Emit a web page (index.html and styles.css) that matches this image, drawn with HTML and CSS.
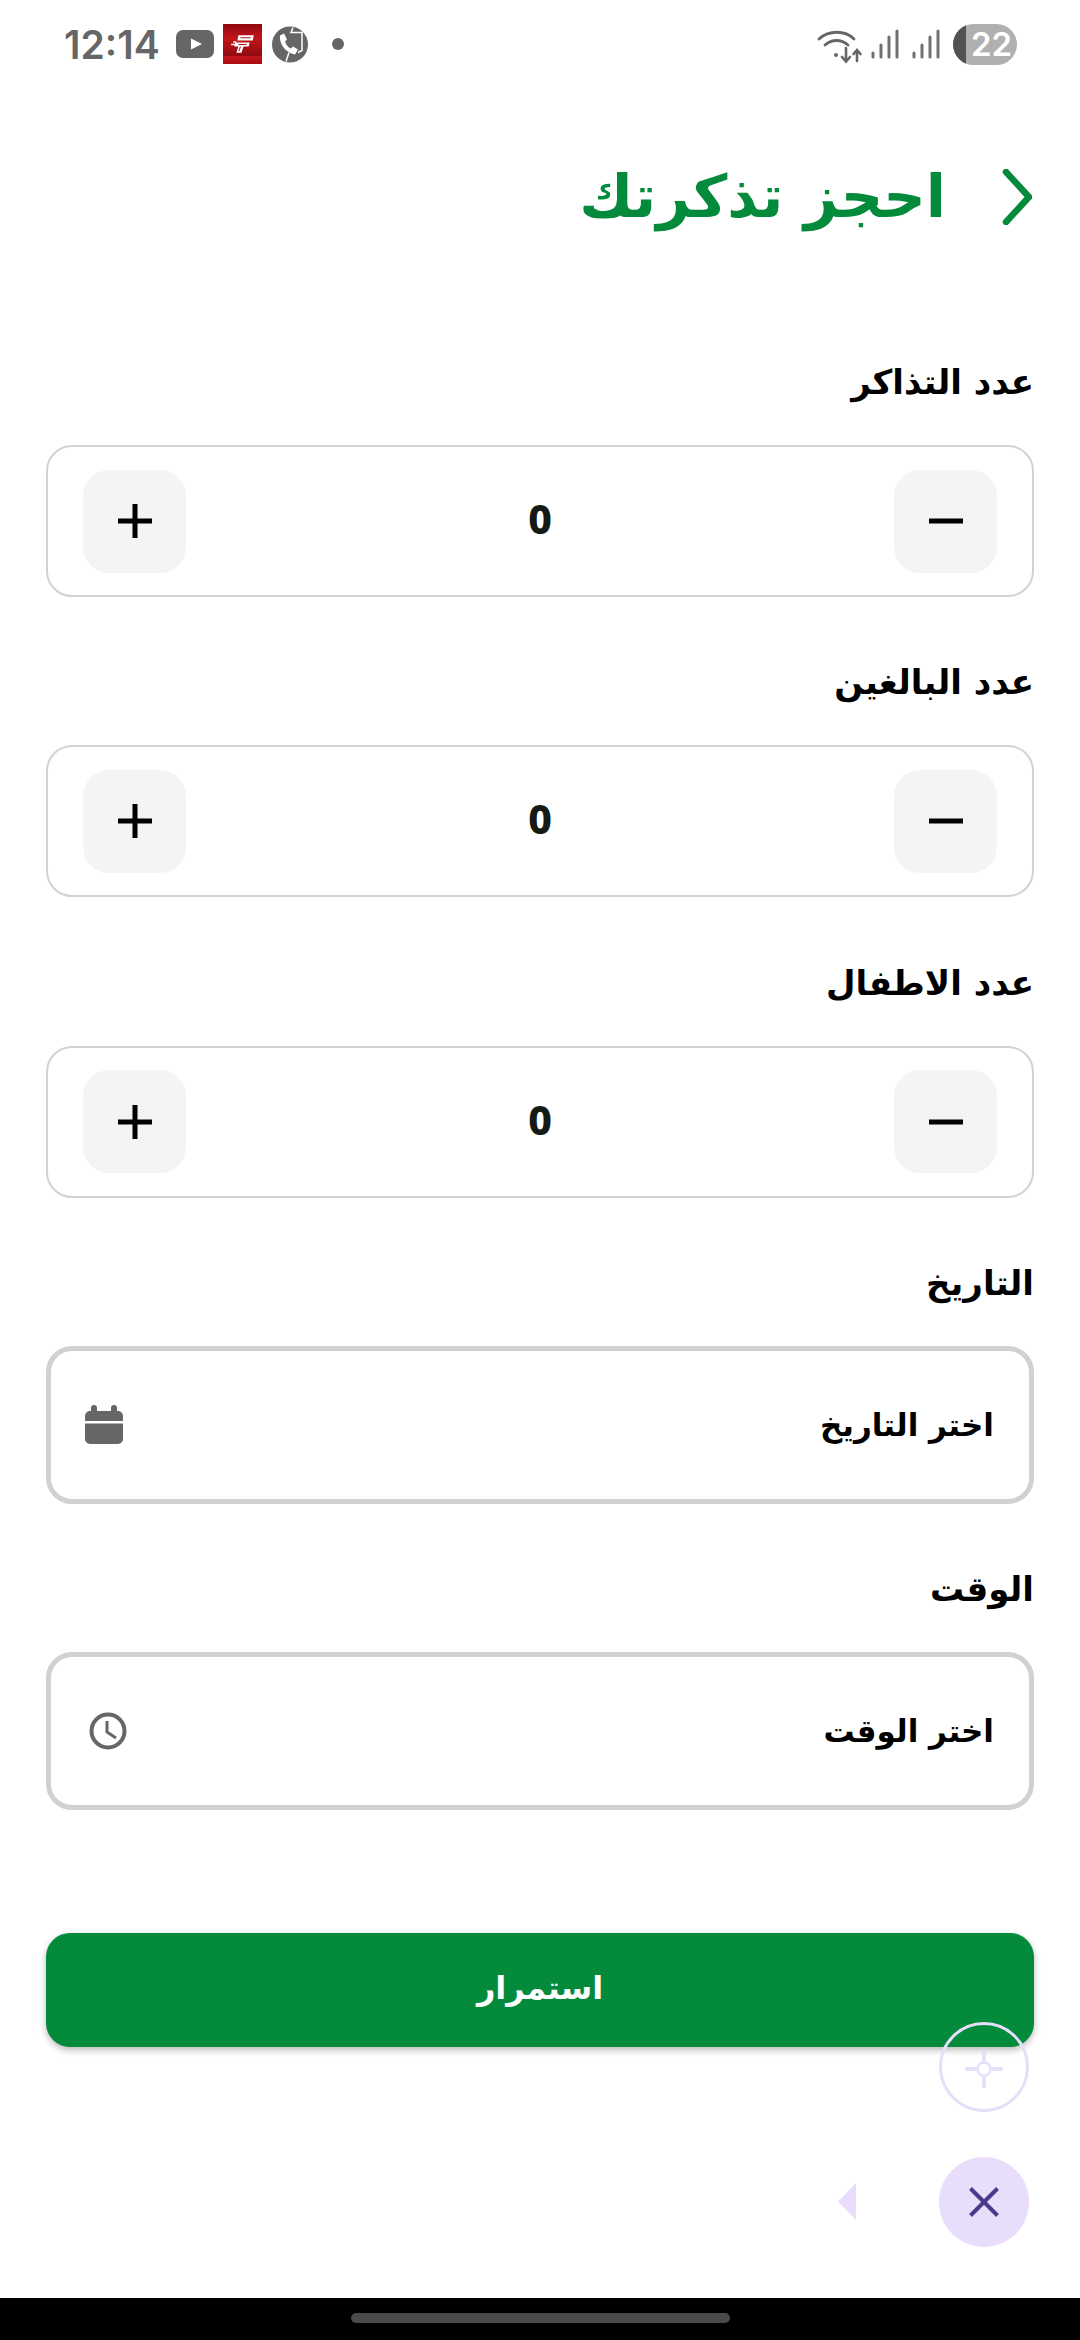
FILE: index.html
```html
<!DOCTYPE html>
<html lang="ar">
<head>
<meta charset="utf-8">
<title>احجز تذكرتك</title>
<link rel="stylesheet" href="styles.css">
</head>
<body>
<div class="page">
  <div class="status" dir="ltr">
    <div class="status-left">
      <span class="time">12:14</span>
      <svg class="ic-yt" viewBox="0 0 38 28"><rect width="38" height="28" rx="7" fill="#666"/><path d="M15 8.500 26 14 15 19.500z" fill="#fff"/></svg>
      <svg class="ic-app" viewBox="0 0 38 39">
        <defs><linearGradient id="red" x1="0" y1="0" x2="0" y2="1"><stop offset="0" stop-color="#8f0a0e"/><stop offset=".35" stop-color="#c2151b"/><stop offset=".8" stop-color="#8f0a0e"/><stop offset=".81" stop-color="#c2151b"/><stop offset="1" stop-color="#a80d12"/></linearGradient></defs>
        <rect width="38" height="39" fill="url(#red)"/>
        <path d="M15 11h15l-1 5H14zM12 18h14l-1 4h-5l-2 6h-5l2-6h-4z" fill="#fff"/>
        <path d="M17 13.500h10M15 20h8M17 22l-1.500 4.500" fill="none" stroke="#b3121a" stroke-width="1"/>
        <path d="M8 20h4M10 17.500h3" stroke="#fff" stroke-width="1.400"/>
      </svg>
      <svg class="ic-call" viewBox="0 0 36 36"><circle cx="18" cy="18" r="18" fill="#666"/><path d="M8 9c-1 8 5 17 15 19l3-5-5-3-2 2c-3-1-5-4-6-7l2-2-3-6z" fill="#fff"/><path d="M21 1l-2 5h11v18l-4 2M14 35l3-9" fill="none" stroke="#fff" stroke-width="1.500"/></svg>
      <span class="dot"></span>
    </div>
    <div class="status-right">
      <svg class="ic-wifi" viewBox="0 0 46 34" fill="none" stroke="#666" stroke-linecap="round">
        <path d="M2 9C12 0 28 0 37 9" stroke-width="2.800"/><path d="M8 15c7-6 16-6 23 0" stroke-width="2.800"/>
        <circle cx="19" cy="25" r="2" fill="#666" stroke="none"/>
        <path d="M29 18v13M25 27l4 4.500 4-4.500M40 31V20M36.500 24l3.500-4 3.500 4" stroke-width="2.600"/>
      </svg>
      <svg class="ic-sig" viewBox="0 0 28 30" fill="none" stroke="#707070" stroke-width="3" stroke-linecap="round"><path d="M2 24v4M10 16v12M18 8v20M26 2v26"/></svg>
      <svg class="ic-sig" viewBox="0 0 28 30" fill="none" stroke="#707070" stroke-width="3" stroke-linecap="round"><path d="M2 24v4M10 16v12M18 8v20M26 2v26"/></svg>
      <span class="battery"><span class="battery-level"></span><span class="battery-num">22</span></span>
    </div>
  </div>

  <div class="content" dir="rtl">
    <header class="head">
      <svg class="chev" viewBox="0 0 30 56" fill="none"><path d="M4 3 27 28 4 53" stroke="#048a3b" stroke-width="6.500" stroke-linecap="round" stroke-linejoin="round"/></svg>
      <h1 class="title">احجز تذكرتك</h1>
    </header>

    <div class="form">
      <section class="field">
        <div class="label">عدد التذاكر</div>
        <div class="stepper">
          <div class="step"><svg class="step-ic" viewBox="0 0 34 34"><path d="M0 17h34" /></svg></div>
          <div class="count">0</div>
          <div class="step"><svg class="step-ic" viewBox="0 0 34 34"><path d="M0 17h34M17 0v34"/></svg></div>
        </div>
      </section>
      <section class="field">
        <div class="label">عدد البالغين</div>
        <div class="stepper">
          <div class="step"><svg class="step-ic" viewBox="0 0 34 34"><path d="M0 17h34" /></svg></div>
          <div class="count">0</div>
          <div class="step"><svg class="step-ic" viewBox="0 0 34 34"><path d="M0 17h34M17 0v34"/></svg></div>
        </div>
      </section>
      <section class="field">
        <div class="label">عدد الاطفال</div>
        <div class="stepper">
          <div class="step"><svg class="step-ic" viewBox="0 0 34 34"><path d="M0 17h34" /></svg></div>
          <div class="count">0</div>
          <div class="step"><svg class="step-ic" viewBox="0 0 34 34"><path d="M0 17h34M17 0v34"/></svg></div>
        </div>
      </section>
      <section class="field">
        <div class="label">التاريخ</div>
        <div class="picker">
          <span class="picker-text">اختر التاريخ</span>
          <svg class="ic-cal" viewBox="0 0 38 39"><path fill="#666" d="M9 0h0a3 3 0 0 1 3 3v3h14V3a3 3 0 0 1 6 0v3h1a5 5 0 0 1 5 5v5H0v-5a5 5 0 0 1 5-5h1V3a3 3 0 0 1 3-3zM0 18.500h38V34a5 5 0 0 1-5 5H5a5 5 0 0 1-5-5z"/></svg>
        </div>
      </section>
      <section class="field">
        <div class="label">الوقت</div>
        <div class="picker">
          <span class="picker-text">اختر الوقت</span>
          <svg class="ic-clock" viewBox="0 0 38 38" fill="none" stroke="#666"><circle cx="19" cy="19" r="16.500" stroke-width="4"/><path d="M18 9v11l9 6" stroke-width="3"/></svg>
        </div>
      </section>
      <button class="cta">استمرار</button>
    </div>
  </div>

  <div class="navbar"><span class="handle"></span></div>

  <div class="fab-ring"><svg class="ic-target" viewBox="0 0 40 40" fill="none" stroke="#e7def9" stroke-linecap="round"><circle cx="20" cy="20" r="6.500" stroke-width="2.500"/><path d="M20 3v8M20 29v8M3 20h8M29 20h8" stroke-width="4"/></svg></div>
  <div class="tri"></div>
  <div class="fab-close"><svg class="ic-x" viewBox="0 0 30 30" fill="none" stroke="#4b3a8c" stroke-width="4"><path d="M1.500 1.500 28.500 28.500M28.500 1.500 1.500 28.500"/></svg></div>
</div>
</body>
</html>
```

FILE: styles.css
```css
* { box-sizing: border-box; }
html, body { margin: 0; padding: 0; background: #fff; }
body { font-family: "DejaVu Sans", "Noto Sans", sans-serif; }
.page { position: relative; width: 1080px; height: 2340px; display: flex; flex-direction: column; overflow: hidden; background: #fff; }

.status { height: 85px; padding: 23px 63px 0 64px; display: flex; justify-content: space-between; align-items: flex-start; flex: none; }
.status-left { display: flex; align-items: center; height: 42px; }
.time { font-family: Inter, Roboto, sans-serif; font-weight: 600; font-size: 39px; color: #666; width: 112px; }
.ic-yt { width: 38px; height: 28px; }
.ic-app { width: 39px; height: 40px; margin-left: 9px; }
.ic-call { width: 36px; height: 37px; margin-left: 10px; }
.dot { width: 12px; height: 12px; border-radius: 50%; background: #666; margin-left: 24px; }
.status-right { display: flex; align-items: center; height: 42px; }
.ic-wifi { width: 46px; height: 34px; margin-right: 8px; margin-top: 6px; }
.ic-sig { width: 28px; height: 30px; margin-right: 13px; }
.battery { position: relative; display: block; width: 64px; height: 41px; border-radius: 21px; background: #b0b0b0; overflow: hidden; }
.battery-level { display: block; width: 13px; height: 41px; background: #525252; }
.battery-num { position: absolute; left: 13px; top: 0; right: 0; text-align: center; font-family: Inter, Roboto, sans-serif; font-weight: 600; font-size: 33px; line-height: 41px; color: #fff; }

.content { flex: 1; padding: 0 46px; display: flex; flex-direction: column; }
.head { height: 265px; padding: 0 2px 42px 0; display: flex; align-items: center; gap: 56px; flex: none; }
.chev { width: 30px; height: 56px; flex: none; }
.title { margin: 0; font-size: 59px; font-weight: 700; color: #048a3b; line-height: 70px; }

.form { display: flex; flex-direction: column; gap: 53.300px; }
.field { display: flex; flex-direction: column; gap: 35px; }
.label { height: 60px; font-size: 34px; font-weight: 700; line-height: 64px; color: #000; }

.stepper { height: 152px; border: 2.500px solid #d2d2d2; border-radius: 26px; display: flex; align-items: center; justify-content: space-between; padding: 0 35px; }
.step { width: 103px; height: 103px; background: #f4f4f4; border-radius: 26px; display: flex; align-items: center; justify-content: center; }
.step-ic { width: 34px; height: 34px; fill: none; stroke: #000; stroke-width: 5; }
.count { font-family: "Noto Sans", "Open Sans", sans-serif; font-weight: 800; font-size: 41px; color: #151a15; margin-bottom: 6px; }

.picker { height: 158px; border: 5.500px solid #d0d1d3; border-radius: 26px; display: flex; align-items: center; justify-content: space-between; padding: 0 35px 0 34px; }
.picker-text { font-size: 31px; font-weight: 700; color: #000; }
.ic-cal { width: 38px; height: 39px; }
.ic-clock { width: 38px; height: 38px; margin-left: 4px; }

.cta { margin-top: 70px; height: 114px; width: 100%; flex: none; border: 0; padding: 0 0 4px; border-radius: 24px; background: #048a3b; color: #fff; font-family: inherit; font-size: 32px; font-weight: 700; box-shadow: 0 3px 7px rgba(0,0,0,.28); }

.navbar { height: 42px; background: #000; flex: none; display: flex; justify-content: center; padding-top: 15px; }
.handle { width: 379px; height: 10px; border-radius: 5px; background: #4a4a4a; }

.fab-ring { position: absolute; left: 939px; top: 2022px; width: 90px; height: 90px; border-radius: 50%; border: 3px solid #e7def9; display: flex; align-items: center; justify-content: center; }
.ic-target { width: 40px; height: 40px; margin-top: 4px; }
.tri { position: absolute; left: 838px; top: 2183px; width: 18px; height: 37px; background: #e9ddfc; clip-path: polygon(100% 0, 100% 100%, 0 50%); }
.fab-close { position: absolute; left: 939px; top: 2157px; width: 90px; height: 90px; border-radius: 50%; background: #e9ddfc; display: flex; align-items: center; justify-content: center; }
.ic-x { width: 30px; height: 30px; }
```
